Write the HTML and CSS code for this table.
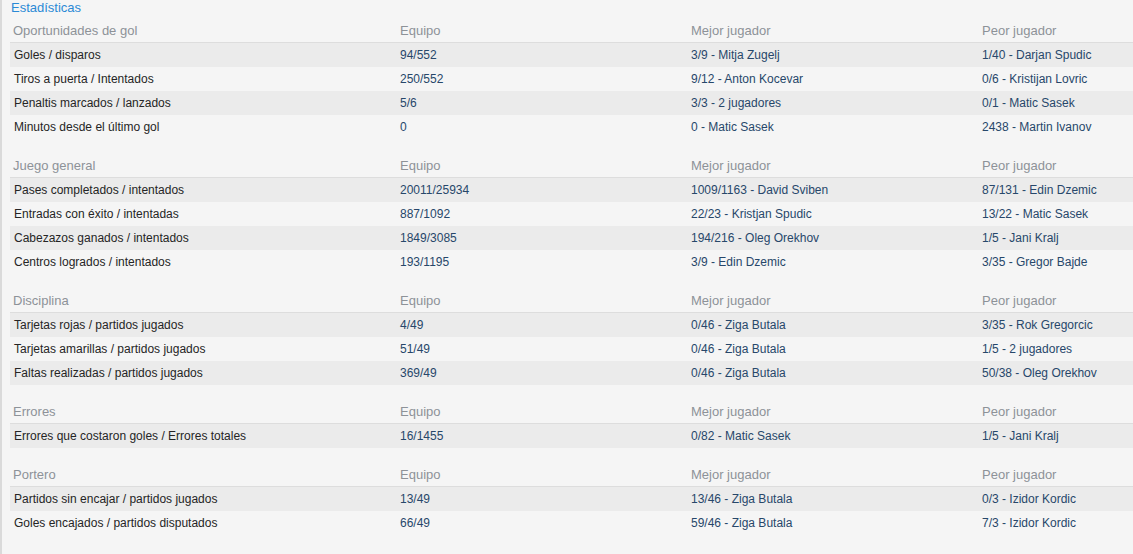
FILE: index.html
```html
<!DOCTYPE html>
<html lang="es">
<head>
<meta charset="utf-8">
<title>Estadísticas</title>
<link rel="stylesheet" href="styles.css">
</head>
<body>
<div class="page">
  <h1 class="title">Estadísticas</h1>

  <section class="group">
    <div class="row head"><span>Oportunidades de gol</span><span>Equipo</span><span>Mejor jugador</span><span>Peor jugador</span></div>
    <div class="row odd"><span class="label">Goles / disparos</span><span class="val">94/552</span><span class="val">3/9 - Mitja Zugelj</span><span class="val">1/40 - Darjan Spudic</span></div>
    <div class="row"><span class="label">Tiros a puerta / Intentados</span><span class="val">250/552</span><span class="val">9/12 - Anton Kocevar</span><span class="val">0/6 - Kristijan Lovric</span></div>
    <div class="row odd"><span class="label">Penaltis marcados / lanzados</span><span class="val">5/6</span><span class="val">3/3 - 2 jugadores</span><span class="val">0/1 - Matic Sasek</span></div>
    <div class="row"><span class="label">Minutos desde el último gol</span><span class="val">0</span><span class="val">0 - Matic Sasek</span><span class="val">2438 - Martin Ivanov</span></div>
  </section>

  <section class="group">
    <div class="row head"><span>Juego general</span><span>Equipo</span><span>Mejor jugador</span><span>Peor jugador</span></div>
    <div class="row odd"><span class="label">Pases completados / intentados</span><span class="val">20011/25934</span><span class="val">1009/1163 - David Sviben</span><span class="val">87/131 - Edin Dzemic</span></div>
    <div class="row"><span class="label">Entradas con éxito / intentadas</span><span class="val">887/1092</span><span class="val">22/23 - Kristjan Spudic</span><span class="val">13/22 - Matic Sasek</span></div>
    <div class="row odd"><span class="label">Cabezazos ganados / intentados</span><span class="val">1849/3085</span><span class="val">194/216 - Oleg Orekhov</span><span class="val">1/5 - Jani Kralj</span></div>
    <div class="row"><span class="label">Centros logrados / intentados</span><span class="val">193/1195</span><span class="val">3/9 - Edin Dzemic</span><span class="val">3/35 - Gregor Bajde</span></div>
  </section>

  <section class="group">
    <div class="row head"><span>Disciplina</span><span>Equipo</span><span>Mejor jugador</span><span>Peor jugador</span></div>
    <div class="row odd"><span class="label">Tarjetas rojas / partidos jugados</span><span class="val">4/49</span><span class="val">0/46 - Ziga Butala</span><span class="val">3/35 - Rok Gregorcic</span></div>
    <div class="row"><span class="label">Tarjetas amarillas / partidos jugados</span><span class="val">51/49</span><span class="val">0/46 - Ziga Butala</span><span class="val">1/5 - 2 jugadores</span></div>
    <div class="row odd"><span class="label">Faltas realizadas / partidos jugados</span><span class="val">369/49</span><span class="val">0/46 - Ziga Butala</span><span class="val">50/38 - Oleg Orekhov</span></div>
  </section>

  <section class="group">
    <div class="row head"><span>Errores</span><span>Equipo</span><span>Mejor jugador</span><span>Peor jugador</span></div>
    <div class="row odd"><span class="label">Errores que costaron goles / Errores totales</span><span class="val">16/1455</span><span class="val">0/82 - Matic Sasek</span><span class="val">1/5 - Jani Kralj</span></div>
  </section>

  <section class="group">
    <div class="row head"><span>Portero</span><span>Equipo</span><span>Mejor jugador</span><span>Peor jugador</span></div>
    <div class="row odd"><span class="label">Partidos sin encajar / partidos jugados</span><span class="val">13/49</span><span class="val">13/46 - Ziga Butala</span><span class="val">0/3 - Izidor Kordic</span></div>
    <div class="row"><span class="label">Goles encajados / partidos disputados</span><span class="val">66/49</span><span class="val">59/46 - Ziga Butala</span><span class="val">7/3 - Izidor Kordic</span></div>
  </section>
</div>
</body>
</html>
```

FILE: styles.css
```css
html, body {
  margin: 0;
  padding: 0;
  background: #f5f5f5;
}

body {
  font-family: "Liberation Sans", Arial, Helvetica, sans-serif;
  font-size: 12px;
  color: #252525;
}

.page {
  min-height: 554px;
  box-sizing: border-box;
  border-left: 2px solid #dadada;
  padding-left: 8px;
  overflow: hidden;
}

.title {
  margin: 0 0 4px 1px;
  font-size: 13px;
  line-height: 15px;
  font-weight: normal;
  color: #2b8ad6;
}

.group + .group {
  margin-top: 15px;
}

.row {
  display: grid;
  grid-template-columns: 386px 291px 291px 1fr;
  height: 24px;
  line-height: 24px;
  white-space: nowrap;
}

.row > span {
  padding: 0 4px;
}

.row.head {
  box-sizing: border-box;
  height: 24px;
  padding-top: 1px;
  line-height: 22px;
  border-bottom: 1px solid #dddddd;
  font-size: 13px;
  color: #8d9298;
}

.row.head > span:first-child {
  padding-left: 3px;
}

.row.odd {
  background: #ebebeb;
}

.label {
  color: #252525;
}

.val {
  color: #27476a;
}
```
